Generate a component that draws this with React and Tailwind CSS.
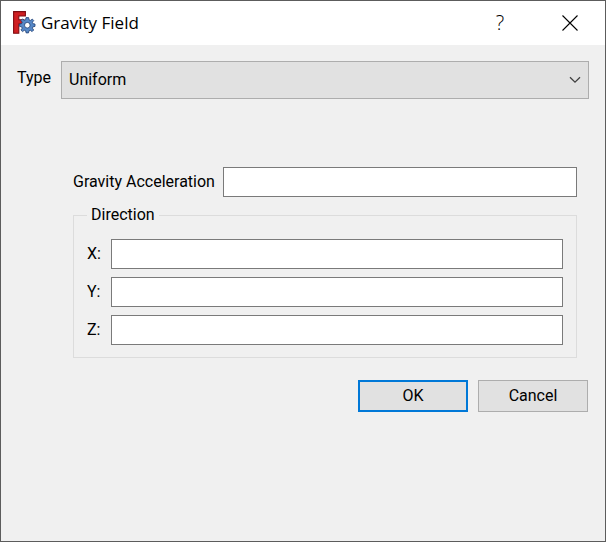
import { useState } from "react";

function AppIcon() {
  return (
    <svg width="24" height="24" viewBox="0 0 24 24" aria-hidden="true" className="shrink-0">
      <path d="M.6 .6H12.4V5H5.8V8.8H11V13H5.8V22.2H.6Z" fill="#cf1f22" stroke="#7d0d12" strokeWidth="1.1" />
      <g transform="translate(14.3 14.2)" fill="#5688c7" stroke="#1f3f73" strokeWidth="0.8" strokeLinejoin="round">
        <path
          fillRule="evenodd"
          d="M-1.3 -7.6H1.3L1.7 -5.4L3.2 -4.8L5 -6.1L6.4 -4.7L5.1 -2.9L5.6 -1.5L7.7 -1.2V1.2L5.6 1.6L5.1 3L6.4 4.8L4.8 6.4L3 5.1L1.6 5.7L1.2 7.7H-1.2L-1.6 5.7L-3 5.1L-4.8 6.4L-6.4 4.8L-5.1 3L-5.7 1.6L-7.7 1.2V-1.2L-5.7 -1.6L-5.1 -3L-6.4 -4.8L-4.9 -6.3L-3.1 -4.9L-1.7 -5.4ZM0 -2.8A2.8 2.8 0 1 0 0 2.8A2.8 2.8 0 1 0 0 -2.8Z"
        />
      </g>
    </svg>
  );
}

function TitleBar() {
  return (
    <header className="flex h-11 items-center bg-white pl-3 font-['Open_Sans','Noto_Sans',sans-serif]">
      <AppIcon />
      <h1 className="ml-1 grow text-[17px]">Gravity Field</h1>
      <button type="button" aria-label="Help" className="flex h-11 w-[70px] items-center justify-center text-xl font-light">
        ?
      </button>
      <button type="button" aria-label="Close" className="flex h-11 w-[70px] items-center justify-center">
        <svg width="16" height="16" viewBox="0 0 16 16" fill="none" stroke="#000" strokeWidth="1.1" aria-hidden="true">
          <path d="M.5 .5L15.5 15.5M15.5 .5L.5 15.5" />
        </svg>
      </button>
    </header>
  );
}

const inputStyle = "h-[30px] min-w-0 grow border border-[#7a7a7a] bg-white px-1 outline-none";

function AxisRow({ axis }) {
  const id = "axis-" + axis;
  return (
    <div className="flex items-center">
      <label htmlFor={id} className="w-6 shrink-0">{axis}:</label>
      <input id={id} type="text" className={inputStyle} />
    </div>
  );
}

export default function App() {
  const [type, setType] = useState("Uniform");
  return (
    <div className="flex min-h-screen flex-col border border-[#5c5c5c] bg-[#f0f0f0] font-[Roboto,'Noto_Sans',sans-serif] text-black">
      <TitleBar />
      <form className="px-4 pt-4 text-base leading-5" onSubmit={(e) => e.preventDefault()}>
        <div className="flex items-center">
          <label htmlFor="type" className="w-11 shrink-0 pb-1">Type</label>
          <div className="grid grow items-center">
            <select
              id="type"
              value={type}
              onChange={(e) => setType(e.target.value)}
              className="col-start-1 row-start-1 h-[38px] w-full appearance-none border border-[#adadad] bg-[#e1e1e1] px-[7px] outline-none"
            >
              <option>Uniform</option>
            </select>
            <svg width="12" height="8" viewBox="0 0 12 8" fill="none" stroke="#404040" strokeWidth="1.3" aria-hidden="true" className="pointer-events-none col-start-1 row-start-1 mr-2 justify-self-end">
              <path d="M1 1.2L6 6.2L11 1.2" />
            </svg>
          </div>
        </div>

        <div className="mt-[68px] pr-3 pl-14">
          <div className="flex items-center">
            <label htmlFor="acceleration" className="w-[150px] shrink-0">Gravity Acceleration</label>
            <input id="acceleration" type="text" className={inputStyle} />
          </div>
          <fieldset className="mt-2 border border-[#dcdcdc] px-[13px] pb-3">
            <legend className="px-1">Direction</legend>
            <div className="mt-3.5 flex flex-col gap-2">
              <AxisRow axis="X" />
              <AxisRow axis="Y" />
              <AxisRow axis="Z" />
            </div>
          </fieldset>
        </div>

        <div className="mt-[22px] flex justify-end gap-2.5 pr-px">
          <button type="submit" className="h-8 w-[110px] border-2 border-[#0078d7] bg-[#e1e1e1]">OK</button>
          <button type="button" className="h-8 w-[110px] border border-[#adadad] bg-[#e1e1e1]">Cancel</button>
        </div>
      </form>
    </div>
  );
}
